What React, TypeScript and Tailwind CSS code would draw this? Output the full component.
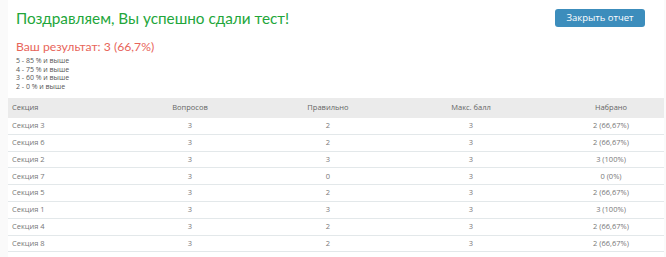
const rows = [
  { name: "Секция 3", q: 3, ok: 2, max: 3, got: "2 (66,67%)" },
  { name: "Секция 6", q: 3, ok: 2, max: 3, got: "2 (66,67%)" },
  { name: "Секция 2", q: 3, ok: 3, max: 3, got: "3 (100%)" },
  { name: "Секция 7", q: 3, ok: 0, max: 3, got: "0 (0%)" },
  { name: "Секция 5", q: 3, ok: 2, max: 3, got: "2 (66,67%)" },
  { name: "Секция 1", q: 3, ok: 3, max: 3, got: "3 (100%)" },
  { name: "Секция 4", q: 3, ok: 2, max: 3, got: "2 (66,67%)" },
  { name: "Секция 8", q: 3, ok: 2, max: 3, got: "2 (66,67%)" },
];

const grid = "grid grid-cols-[100px_164px_112px_174px_106px]";

export default function App() {
  return (
    <div className="h-[257px] w-[666px] overflow-hidden bg-[#fafafa] pl-[8px] pr-[2px] font-['Open_Sans',sans-serif]">
      <div className="h-full bg-white">
        <div className="flex items-start justify-between pl-[8px] pr-[19px] pt-[6px]">
          <h1 className="font-['Lato',sans-serif] text-[15.3px] leading-[24px] text-[#22a63a]">
            Поздравляем, Вы успешно сдали тест!
          </h1>
          <button className="mt-[3px] h-[18px] w-[90px] rounded-[3px] bg-[#3c8dbc] text-[9.5px] text-white">
            Закрыть отчет
          </button>
        </div>
        <div className="pl-[8px] pt-[9px] font-['Lato',sans-serif] text-[12.2px] leading-[16px] text-[#e8655a]">
          Ваш результат: 3 (66,7%)
        </div>
        <div className="pl-[8px] pt-[2px] text-[7px] leading-[8.5px] text-[#555]">
          <div>5 - 85 % и выше</div>
          <div>4 - 75 % и выше</div>
          <div>3 - 60 % и выше</div>
          <div>2 - 0 % и выше</div>
        </div>
        <div className="mt-[7px] text-[7.5px] text-[#777]">
          <div className={`${grid} h-[20px] items-center bg-[#ebebeb] text-[#666]`}>
            <div className="pl-[4px]">Секция</div>
            <div className="text-center">Вопросов</div>
            <div className="text-center">Правильно</div>
            <div className="text-center">Макс. балл</div>
            <div className="text-center">Набрано</div>
          </div>
          {rows.map((r) => (
            <div key={r.name} className={`${grid} h-[16.8px] items-center border-b border-[#e3e8ea]`}>
              <div className="pl-[4px]">{r.name}</div>
              <div className="text-center">{r.q}</div>
              <div className="text-center">{r.ok}</div>
              <div className="text-center">{r.max}</div>
              <div className="text-center">{r.got}</div>
            </div>
          ))}
        </div>
      </div>
    </div>
  );
}
